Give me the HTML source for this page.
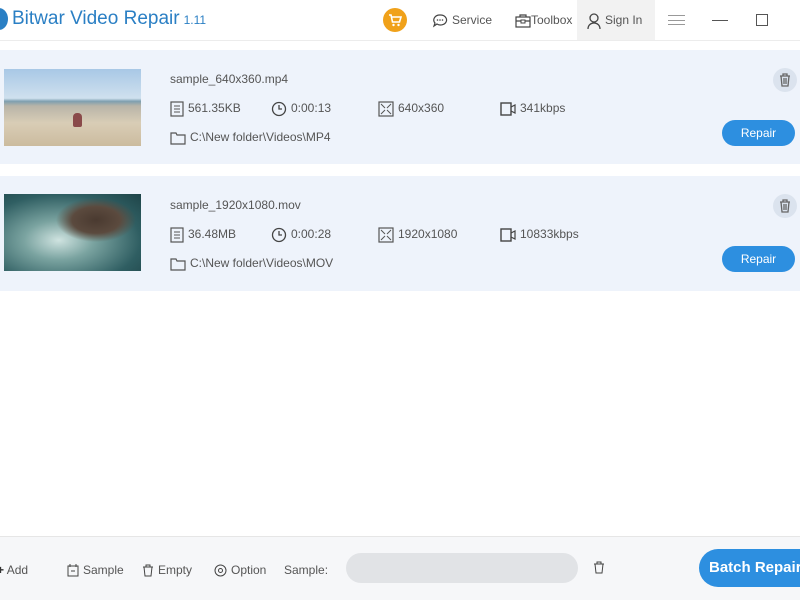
<!DOCTYPE html>
<html><head><meta charset="utf-8"><style>
*{margin:0;padding:0;box-sizing:border-box}
body{width:800px;height:600px;overflow:hidden;background:#fff;font-family:"Liberation Sans",sans-serif;position:relative;color:#555}
.abs{position:absolute}
.title{left:12px;top:8px;font-size:19px;color:#2a7fc4}
.title small{font-size:12px;margin-left:4px}
.logo{left:-10px;top:8px;width:18px;height:22px;border-radius:50%;background:#2a7fc4}
.nav{font-size:12px;color:#555;top:13px}
.row{left:0;width:800px;background:#eef3fb}
.thumb{left:4px;width:137px;height:77px}
.fn{font-size:12px;color:#555}
.meta{font-size:12px;color:#555}
.ic{display:inline-block;vertical-align:middle;margin-right:4px}
.rep{left:722px;width:73px;height:26px;border-radius:13px;background:#2d8fe0;color:#fff;font-size:12px;text-align:center;line-height:26px}
.del{left:773px;width:24px;height:24px;border-radius:50%;background:#dbe3ee}
.foot{left:0;top:536px;width:800px;height:64px;background:#f6f7f9;border-top:1px solid #e6e6e6}
.fi{font-size:12px;color:#555;top:563px}
</style></head><body>
<div class="abs logo"></div>
<div class="abs title">Bitwar Video Repair<small>1.11</small></div>
<div class="abs" style="left:383px;top:8px;width:24px;height:24px;border-radius:50%;background:#f0a11a"></div>
<svg class="abs" style="left:388px;top:13px" width="14" height="14" viewBox="0 0 14 14"><path d="M1 2h2l1.5 7h7l1.5-5H4" fill="none" stroke="#fff" stroke-width="1.6"/><circle cx="5.5" cy="12" r="1.2" fill="#fff"/><circle cx="10.5" cy="12" r="1.2" fill="#fff"/></svg>
<div class="abs nav" style="left:432px"><svg class="ic" width="16" height="16" viewBox="0 0 16 16"><path d="M8 2a6 5 0 1 1-3 9l-3 2 1-3A6 5 0 0 1 8 2z" fill="none" stroke="#444" stroke-width="1.2"/><circle cx="5.5" cy="7" r=".8" fill="#444"/><circle cx="8" cy="7" r=".8" fill="#444"/><circle cx="10.5" cy="7" r=".8" fill="#444"/></svg>Service</div>
<div class="abs nav" style="left:515px"><svg class="ic" width="16" height="14" viewBox="0 0 16 14" style="margin-right:0"><rect x="1" y="3" width="14" height="10" fill="none" stroke="#444" stroke-width="1.2"/><path d="M5 3V1h6v2M1 7h14" stroke="#444" fill="none" stroke-width="1.2"/><rect x="6" y="6" width="4" height="3" fill="#fff" stroke="#444"/></svg>Toolbox</div>
<div class="abs" style="left:577px;top:0;width:78px;height:40px;background:#f2f2f2"></div>
<div class="abs nav" style="left:587px"><svg class="ic" width="14" height="16" viewBox="0 0 14 16"><circle cx="7" cy="5" r="4" fill="none" stroke="#444" stroke-width="1.3"/><path d="M1 16c0-4 3-6 6-6s6 2 6 6" fill="none" stroke="#444" stroke-width="1.3"/></svg>Sign In</div>
<div class="abs" style="left:668px;top:15px;width:17px;height:10px;border-top:1px solid #999;border-bottom:1px solid #999"></div>
<div class="abs" style="left:668px;top:20px;width:17px;height:1px;background:#999"></div>
<div class="abs" style="left:712px;top:20px;width:16px;height:1px;background:#555"></div>
<div class="abs" style="left:756px;top:14px;width:12px;height:12px;border:1px solid #555"></div>
<div class="abs" style="left:0;top:40px;width:800px;height:1px;background:#ececec"></div>

<div class="abs row" style="top:50px;height:114px"></div>
<div class="abs thumb" style="top:69px;background:linear-gradient(#a8c8e6 0%,#cfe0ee 38%,#7e9fb0 42%,#b8b4a8 48%,#d9cdb6 70%,#cbbb9e 100%)"></div>
<div class="abs" style="left:73px;top:113px;width:9px;height:14px;background:#8a4a4a;border-radius:4px 4px 2px 2px"></div>
<div class="abs fn" style="left:170px;top:72px">sample_640x360.mp4</div>
<div class="abs meta" style="left:170px;top:101px"><svg class="ic" width="14" height="16"><rect x="1" y="1" width="12" height="14" fill="none" stroke="#555" stroke-width="1.2"/><path d="M4 5h6M4 8h6M4 11h6" stroke="#555"/></svg>561.35KB</div>
<div class="abs meta" style="left:271px;top:101px"><svg class="ic" width="16" height="16"><circle cx="8" cy="8" r="6.5" fill="none" stroke="#444" stroke-width="1.3"/><path d="M8 4v4h3" fill="none" stroke="#444" stroke-width="1.3"/></svg>0:00:13</div>
<div class="abs meta" style="left:378px;top:101px"><svg class="ic" width="16" height="16"><rect x="1" y="1" width="14" height="14" fill="none" stroke="#555" stroke-width="1.2"/><path d="M3 3l4 4M13 3l-4 4M3 13l4-4M13 13l-4-4" stroke="#555"/></svg>640x360</div>
<div class="abs meta" style="left:500px;top:101px"><svg class="ic" width="16" height="16"><rect x="1" y="2" width="10" height="12" fill="none" stroke="#444" stroke-width="1.4"/><path d="M11 6l4-2v8l-4-2" fill="none" stroke="#444" stroke-width="1.2"/></svg>341kbps</div>
<div class="abs meta" style="left:170px;top:130px"><svg class="ic" width="16" height="14"><path d="M1 2h5l1 2h8v9H1z" fill="none" stroke="#555" stroke-width="1.2"/></svg>C:\New folder\Videos\MP4</div>
<div class="abs del" style="top:68px"></div>
<svg class="abs" style="left:779px;top:73px" width="12" height="14"><path d="M1 3h10M4 3V1h4v2M2 3l1 10h6l1-10M5 5v6M7 5v6" fill="none" stroke="#666" stroke-width="1.3"/></svg>
<div class="abs rep" style="top:120px">Repair</div>

<div class="abs row" style="top:176px;height:115px"></div>
<div class="abs thumb" style="top:194px;background:radial-gradient(ellipse 40px 22px at 92px 26px,#4a3a30 0%,#5b4a3e 60%,transparent 100%),radial-gradient(ellipse at 40% 60%,#cfe3e0 0%,#7aa3a0 30%,#2f5e62 70%,#1e4448 100%)"></div>
<div class="abs fn" style="left:170px;top:198px">sample_1920x1080.mov</div>
<div class="abs meta" style="left:170px;top:227px"><svg class="ic" width="14" height="16"><rect x="1" y="1" width="12" height="14" fill="none" stroke="#555" stroke-width="1.2"/><path d="M4 5h6M4 8h6M4 11h6" stroke="#555"/></svg>36.48MB</div>
<div class="abs meta" style="left:271px;top:227px"><svg class="ic" width="16" height="16"><circle cx="8" cy="8" r="6.5" fill="none" stroke="#444" stroke-width="1.3"/><path d="M8 4v4h3" fill="none" stroke="#444" stroke-width="1.3"/></svg>0:00:28</div>
<div class="abs meta" style="left:378px;top:227px"><svg class="ic" width="16" height="16"><rect x="1" y="1" width="14" height="14" fill="none" stroke="#555" stroke-width="1.2"/><path d="M3 3l4 4M13 3l-4 4M3 13l4-4M13 13l-4-4" stroke="#555"/></svg>1920x1080</div>
<div class="abs meta" style="left:500px;top:227px"><svg class="ic" width="16" height="16"><rect x="1" y="2" width="10" height="12" fill="none" stroke="#444" stroke-width="1.4"/><path d="M11 6l4-2v8l-4-2" fill="none" stroke="#444" stroke-width="1.2"/></svg>10833kbps</div>
<div class="abs meta" style="left:170px;top:256px"><svg class="ic" width="16" height="14"><path d="M1 2h5l1 2h8v9H1z" fill="none" stroke="#555" stroke-width="1.2"/></svg>C:\New folder\Videos\MOV</div>
<div class="abs del" style="top:194px"></div>
<svg class="abs" style="left:779px;top:199px" width="12" height="14"><path d="M1 3h10M4 3V1h4v2M2 3l1 10h6l1-10M5 5v6M7 5v6" fill="none" stroke="#666" stroke-width="1.3"/></svg>
<div class="abs rep" style="top:246px">Repair</div>

<div class="abs foot"></div>
<div class="abs fi" style="left:-3px;font-size:12px"><b style="color:#333">+</b> Add</div>
<div class="abs fi" style="left:67px"><svg class="ic" width="12" height="13"><rect x="1" y="2" width="10" height="10" fill="none" stroke="#444"/><path d="M3 0v3M9 0v3M4 7h4" stroke="#444"/></svg>Sample</div>
<div class="abs fi" style="left:142px"><svg class="ic" width="12" height="13"><path d="M1 3h10M4 3V1h4v2M2 3l1 9h6l1-9" fill="none" stroke="#444"/></svg>Empty</div>
<div class="abs fi" style="left:214px"><svg class="ic" width="13" height="13"><circle cx="6.5" cy="6.5" r="5.5" fill="none" stroke="#444"/><circle cx="6.5" cy="6.5" r="2" fill="none" stroke="#444"/></svg>Option</div>
<div class="abs fi" style="left:284px">Sample:</div>
<div class="abs" style="left:346px;top:553px;width:232px;height:30px;border-radius:15px;background:#e1e3e6"></div>
<svg class="abs" style="left:593px;top:561px" width="12" height="13"><path d="M1 3h10M4 3V1h4v2M2 3l1 9h6l1-9" fill="none" stroke="#444"/></svg>
<div class="abs" style="left:699px;top:549px;width:120px;height:38px;border-radius:19px;background:#2d8fe0;color:#fff;font-weight:bold;font-size:15px;line-height:38px;padding-left:10px">Batch Repair</div>
</body></html>
